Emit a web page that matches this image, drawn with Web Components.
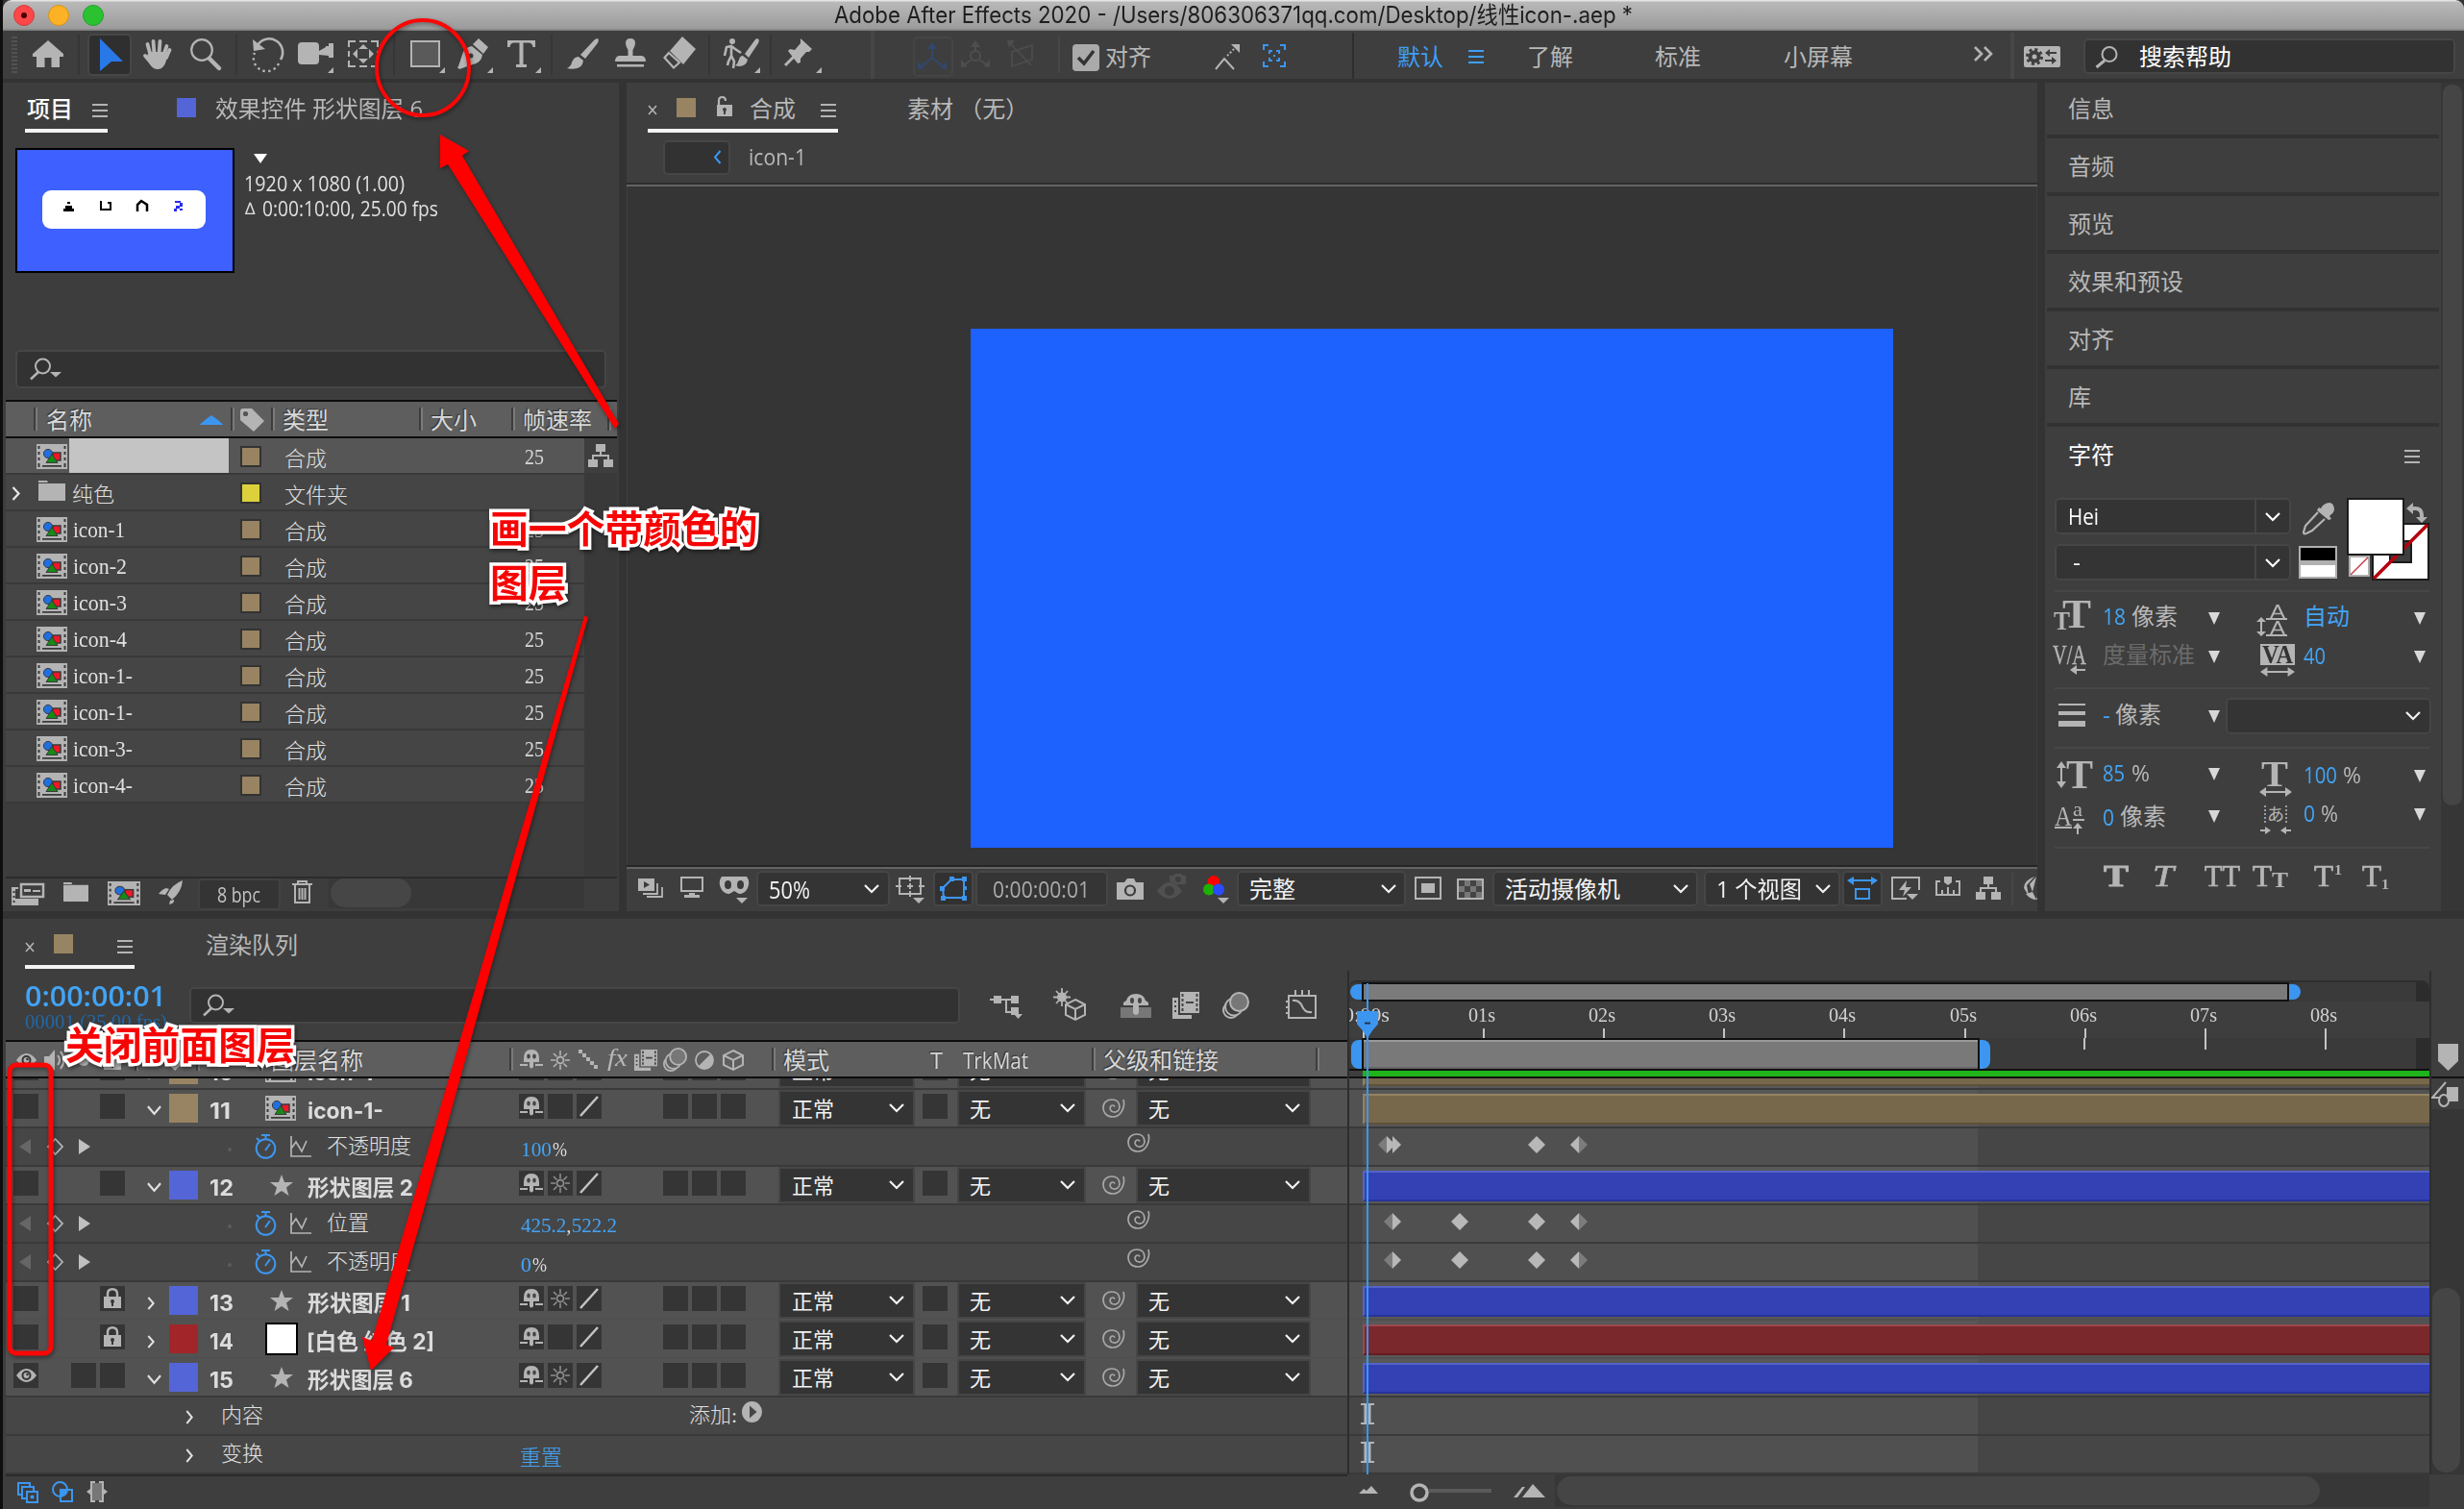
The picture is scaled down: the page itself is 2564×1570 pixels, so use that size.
<!DOCTYPE html>
<html lang="zh-CN">
<head>
<meta charset="utf-8">
<title>Adobe After Effects 2020</title>
<style>
html,body{margin:0;background:#333;overflow:hidden}
</style>
</head>
<body>
<ae-window></ae-window>
<script>
const UI='"Open Sans","Noto Sans CJK SC",sans-serif';
const SERIF='"Liberation Serif","Noto Sans CJK SC",serif';
const INTER='Inter,"Noto Sans CJK SC",sans-serif';

/* ---------- icon set: [width, height, svg content] ---------- */
const shapes=`<circle cx="12" cy="10" r="4.6" fill="#1f6fe0" stroke="#3a3a3a"/><rect x="17" y="9" width="8" height="8" fill="#f01828" stroke="#3a3a3a" stroke-width="1.5"/><path d="M10 19.5L16 10.5L22 19.5Z" fill="#168a16" stroke="#3a3a3a"/>`;
const moon=(b)=>`<g fill="${b}" stroke="currentColor" stroke-width="2"><ellipse cx="9" cy="19" rx="8" ry="8"/><ellipse cx="12" cy="15.5" rx="9" ry="9"/><ellipse cx="17.500" cy="10.500" rx="9.500" ry="9.500" fill="#777"/></g>`;
const S='fill="none" stroke="currentColor"';
const ICONS={
 corner:[6,6,`<path d="M6 0V6H0Z"/>`],
 tri:[12,13,`<path d="M0 0H12L6 13Z"/>`],
 tris:[12,6,`<path d="M0 0H12L6 6Z"/>`],
 ham:[16,14,`<path d="M0 0H16V2H0ZM0 6H16V8H0ZM0 12H16V14H0Z"/>`],
 chev:[16,9,`<path d="M1 1L8 8L15 1" ${S} stroke-width="2.200"/>`],
 chevr:[9,15,`<path d="M1.500 1L7.500 7.500L1.500 14" ${S} stroke-width="2.200"/>`],
 chevl:[9,15,`<path d="M7.500 1L2 7.500L7.500 14" ${S} stroke-width="2"/>`],
 close:[10,11,`<path d="M1 1L9 10M9 1L1 10" ${S} stroke-width="1.600"/>`],
 find:[34,23,`<circle cx="13.500" cy="9" r="7.500" ${S} stroke-width="2"/><path d="M9 15L1 22.500" ${S} stroke-width="2.500"/><path d="M21 15H33L27 20.500Z"/>`],
 mag:[24,23,`<circle cx="15" cy="8.500" r="7.500" ${S} stroke-width="2"/><path d="M10 15L1.500 22" ${S} stroke-width="3"/>`],
 grip:[6,38,`<path d="M0 0h6v2H0zM0 4h6v2H0zM0 8h6v2H0zM0 12h6v2H0zM0 16h6v2H0zM0 20h6v2H0zM0 24h6v2H0zM0 28h6v2H0zM0 32h6v2H0zM0 36h6v2H0z"/>`],
 home:[32,28,`<path d="M16 0L32 14V17H28V28H19.500V18H12.500V28H4V17H0V14Z"/>`],
 arrow:[24,34,`<path d="M0 0L24 24L12 24L0 34Z"/>`],
 hand:[31,32,`<path d="M8.500 17L5.500 6M12.500 16L11.500 3M17.500 16L18.500 3M22 18L25.500 8M28.500 12L25 20M9 25L3 18" ${S} stroke-width="3.800" stroke-linecap="round"/><path d="M7 14H24L26 18Q24 32 16 32Q11 32 8 27L4 20Z"/>`],
 zoom:[33,33,`<ellipse cx="12" cy="12" rx="10.800" ry="10.800" ${S} stroke-width="2.200"/><path d="M20 21L30 31" ${S} stroke-width="4.500" stroke-linecap="round"/>`],
 rotate:[32,33,`<path d="M5 7A14 14 0 0 1 29 22" ${S} stroke-width="2.600"/><path d="M27 26A13.500 13.500 0 0 1 2 15" ${S} stroke-width="2.400" stroke-dasharray="2.400 3.400"/><path d="M0 1L1 13L13 11Z"/>`],
 cam:[37,23,`<rect x="0" y="0" width="22" height="23" rx="4"/><path d="M22 9L29 5V4H32V1H37V16H32V14L22 13Z"/>`],
 pan:[32,28,`<path d="M1 7V1H8M12 1H20M24 1H31V7M31 21V27H24M20 27H12M8 27H1V21M1 11V17M31 11V17" ${S} stroke-width="2"/><path d="M16 4L21 9H11ZM16 24L11 19H21ZM5 14L10 9V19ZM27 14L22 19V9Z"/>`],
 rect:[31,28,`<rect x="1" y="1" width="29" height="26" fill="#5a5a5a" stroke="currentColor" stroke-width="2"/>`],
 pen:[32,32,`<path d="M22 0L32 9L27 16L16 6ZM15 8L26 17Q25 25 16 27L2 32L0 30L9 20L8 22L1 29L6 14Q9 9 15 8Z"/><circle cx="14" cy="18" r="2.500" fill="#3e3e3e"/>`],
 type:[29,28,`<path d="M0 0H29V7H26.500Q26 2.500 22 2.500H16.500V25H20V28H9V25H12.500V2.500H7Q3 2.500 2.500 7H0Z"/>`],
 brush:[33,32,`<path d="M32 0Q34 2 31 6L19 21L14 17L28 2Q30 0 32 0ZM12 19L17 23Q16 31 8 31.500Q3 32 0 31Q4 29 5 25Q7 19 12 19Z"/>`],
 stamp:[32,30,`<path d="M16 0Q21 0 21 5Q21 8 18.500 12V18H28Q32 19 32 24H0Q0 19 4 18H13.500V12Q11 8 11 5Q11 0 16 0Z"/><rect x="2" y="27" width="28" height="2.500"/>`],
 eraser:[34,34,`<path d="M20 0L34 13L21 29L7 15Z"/><path d="M6 17L1.500 22L11 32.500L17 27Z" ${S} stroke-width="2.200"/>`],
 roto:[38,32,`<circle cx="10" cy="3" r="3"/><path d="M2 18L4 9L9 8L13 11L19 15M9 8V18L12 24L11 31M9 18L6 24L5 28" ${S} stroke-width="2.600"/><path d="M36 0Q39 1 37 5L27 20L23 16L34 1ZM21 18L26 22Q25 28 18 29Q15 29 13 28Q16 26 17 22Q18 18 21 18Z"/>`],
 pin:[29,29,`<path d="M17 0L29 11L26 14H23L17 21V25L14 26L4 13L6 11L11 12L17 5Z"/><path d="M11 18L1 28" ${S} stroke-width="3"/>`],
 axis:[30,28,`<path d="M15 3V16L4 25M15 16L26 25" ${S} stroke-width="2"/><path d="M15 0L20 7H10ZM0 28V20L7 27ZM30 28V20L23 27Z"/>`],
 axis2:[30,28,`<path d="M15 3V12M11 20L4 25M19 20L26 25" ${S} stroke-width="2"/><circle cx="15" cy="16" r="5" ${S} stroke-width="2"/><path d="M15 0L20 7H10ZM0 28V20L7 27ZM30 28V20L23 27Z"/>`],
 axis3:[27,28,`<path d="M5 12L26 5V20L5 27ZM3 3L25 26" ${S} stroke-width="1.600"/><path d="M0 0H8L2 8Z"/>`],
 check:[28,28,`<rect width="28" height="28" rx="4" fill="#aaa"/><path d="M6 14L12 20L22 7" fill="none" stroke="#333" stroke-width="3.500"/>`],
 snap:[26,27,`<path d="M1 26L10 15L20 26" ${S} stroke-width="2"/><path d="M13 12L20 5" ${S} stroke-width="2" stroke-dasharray="2 2"/><path d="M17 0H26V9Z"/>`],
 brk:[24,24,`<path d="M1 6V1H6M18 1H23V6M23 18V23H18M6 23H1V18M7 10V7H10M14 7H17V10M17 14V17H14M10 17H7V14" ${S} stroke-width="2"/><path d="M11 11h2v2h-2z"/>`],
 more:[22,16,`<path d="M1 1L8 8L1 15M11 1L18 8L11 15" ${S} stroke-width="2.600"/>`],
 sync:[38,22,`<rect width="38" height="22" rx="2"/><circle cx="11" cy="11" r="4.500" fill="none" stroke="#3e3e3e" stroke-width="4"/><circle cx="11" cy="11" r="7.500" fill="none" stroke="#3e3e3e" stroke-width="3" stroke-dasharray="3 2.900"/><path d="M22 7L27 3V6H34V8H27V11ZM34 15L29 11V14H22V16H29V19Z" fill="#3e3e3e"/>`],
 lockopen:[17,21,`<path d="M1 9H17V21H1Z"/><path d="M3 9V5Q3 1 6.500 1T10 5" ${S} stroke-width="2.200"/><circle cx="9" cy="14" r="2" fill="#3e3e3e"/><path d="M8 14h2v5h-2z" fill="#3e3e3e"/>`],
 lock:[18,21,`<path d="M0 9H18V21H0Z"/><path d="M4 9V6Q4 1.200 9 1.200T14 6V9" ${S} stroke-width="2.400"/><circle cx="9" cy="14" r="2" fill="#353535"/><path d="M8 14h2v5h-2z" fill="#353535"/>`],
 up:[24,10,`<path d="M0 10Q1 8 12 0Q23 8 24 10Z"/>`],
 tag:[25,24,`<path d="M3 0H12L25 13L14 24L0 12V3Q0 0 3 0Z"/><circle cx="5.500" cy="5.500" r="2.600" fill="#555"/>`],
 comp:[32,26,`<rect width="32" height="26"/><path d="M1.500 2h2v3h-2zM1.500 8h2v3h-2zM1.500 14h2v3h-2zM1.500 20h2v4h-2zM28.500 2h2v3h-2zM28.500 8h2v3h-2zM28.500 14h2v3h-2zM28.500 20h2v4h-2zM6 22h20v1.800H6z" fill="#3a3a3a"/>${shapes}`],
 folder:[28,21,`<path d="M0 0H9L10 2H0ZM0 3H28V21H0Z"/>`],
 net:[26,24,`<path d="M8 0H18V8H8ZM0 16H10V24H0ZM16 16H26V24H16Z"/><path d="M13 8V12M5 16V12H21V16" ${S} stroke-width="2"/>`],
 interp:[34,23,`<path d="M10 1H33V14H10Z" ${S} stroke-width="2.500"/><path d="M13 6h7v3h-7zM22 7h8v2h-8zM0 4H7V6H4V16H28V23H0Z"/><path d="M1.500 8h2v2h-2zM1.500 13h2v2h-2zM1.500 18h2v2h-2z" fill="#3a3a3a"/>`],
 rocket:[25,25,`<path d="M25 0Q24 12 14 20L9 15Q14 4 25 0ZM8 8L11 9L7 15L0 14Q4 9 8 8ZM16 20Q17 24 11 25L12 21Z"/>`],
 trash:[21,24,`<path d="M0 4H21M6 3V1H15V3M3 5V23H18V5M7.500 8V20M10.500 8V20M13.500 8V20" ${S} stroke-width="2"/>`],
 prev:[26,20,`<path d="M0 0H17V13H0Z"/><path d="M20 5V16H5M25 9V19H9" ${S} stroke-width="1.800"/><path d="M6 3L12 6.500L6 10Z" fill="#3a3a3a"/>`],
 mon:[24,22,`<path d="M1 1H23V15H1Z" ${S} stroke-width="2"/><path d="M9 17H15V19H20V22H4V19H9Z"/>`],
 mask:[32,18,`<path d="M3 0H29Q33 5 30 12Q27 18 21 18L16 15L11 18Q5 18 2 12Q-1 5 3 0Z"/><ellipse cx="9.500" cy="8.500" rx="3.500" ry="4.500" fill="#3a3a3a"/><ellipse cx="22.500" cy="8.500" rx="3.500" ry="4.500" fill="#3a3a3a"/>`],
 safe:[30,22,`<path d="M4 3H26V19H4ZM15 0V6M15 16V22M0 11H6M24 11H30M12 11H18M15 8V14" ${S} stroke-width="2"/>`],
 shape:[28,25,`<path d="M3 12L12 3H25V22H4Z" ${S} stroke-width="2"/><path d="M10 0h5v5h-5zM23 0h5v5h-5zM0 10h5v5H0zM1 20h5v5H1zM23 20h5v5h-5zM24 10h4v4h-4z"/>`],
 photo:[28,22,`<path d="M0 4H8L11 0H18L20 4H28V22H0Z"/><circle cx="14" cy="12.500" r="5" fill="none" stroke="#3a3a3a" stroke-width="2.200"/>`],
 ghost:[30,26,`<path d="M0 18Q6 9 13 9T26 18Q20 26 13 26T0 18Z"/><circle cx="13" cy="18" r="5" fill="#3e3e3e"/><path d="M13 2h4l2-2h6l2 2h3v9H20L13 8z"/><circle cx="22" cy="6" r="3" fill="#3e3e3e"/>`],
 rgb:[22,21,`<circle cx="11" cy="6.500" r="6.500" fill="#f00"/><circle cx="6" cy="14.500" r="6" fill="#1db100"/><circle cx="16" cy="14.500" r="6" fill="#2a4bff"/>`],
 sq:[28,24,`<path d="M1 1H27V23H1Z" ${S} stroke-width="2"/><path d="M7 7H21V17H7Z"/>`],
 chk:[28,22,`<path d="M1 1H27V21H1Z" fill="#777" stroke="currentColor" stroke-width="2"/><path d="M2 2h6v6H2zM14 2h6v6h-6zM8 8h6v6H8zM20 8h6v6h-6zM2 14h6v6H2zM14 14h6v6h-6z" fill="#444"/>`],
 par:[32,24,`<path d="M4 4H28" ${S} stroke-width="2"/><path d="M0 4L7 0V9ZM32 4L25 0V9Z"/><path d="M9 13H23V23H9Z" ${S} stroke-width="2"/>`],
 fast:[30,24,`<path d="M29 14V1H1V23H16" ${S} stroke-width="2"/><path d="M16 4L8 14H14L12 21L21 11H15ZM16 18H28L22 24Z"/>`],
 tl:[26,20,`<path d="M5 5H1V19H25V5H21M7 14V19M13 11V19M19 14V19" ${S} stroke-width="2"/><path d="M9 0H17V6L13 9L9 6Z"/>`],
 aper:[26,24,`<path d="M11 0Q0 4 0 12L5 20L3 9ZM13 0L6 8L9 16ZM2 18Q7 24 13 24L9 16ZM20 2V24L13 24Z"/>`],
 drop:[34,34,`<path d="M22 3Q25 0 29 0T34 6Q34 10 31 12L29 14L31 17L28 18L16 8L18 5L20 6Z"/><path d="M17 10L4 24L2 31Q2 33 5 32L11 29L24 17" ${S} stroke-width="2.200"/>`],
 bw:[40,34,`<rect width="40" height="34" fill="#b0b0b0"/><path d="M2 2H38V15H2Z" fill="#000"/><path d="M2 20H38V32H2Z" fill="#fff"/>`],
 swatch:[86,86,`<rect x="27" y="27" width="58" height="58" fill="#fff" stroke="#1b1b1b" stroke-width="2"/><rect x="45" y="45" width="22" height="22" fill="#3e3e3e" stroke="#1b1b1b" stroke-width="2"/><path d="M28 84L84 28" stroke="#b8000c" stroke-width="3.500"/><rect x="1" y="1" width="58" height="58" fill="#fff" stroke="#1b1b1b" stroke-width="2"/><rect x="3" y="61" width="20" height="20" fill="#fff" stroke="#b0b0b0" stroke-width="2"/><path d="M4 80L22 62" stroke="#cc3a40" stroke-width="1.500"/><path d="M66 11H71Q78 11 78 18V20" fill="none" stroke="#b0b0b0" stroke-width="4"/><path d="M62 11L69 5V17ZM72 20H84L78 26Z" fill="#b0b0b0"/>`],
 lines:[28,24,`<path d="M0 0H28V2H0ZM0 8H28V12H0ZM0 18H28V24H0Z"/>`],
 ud:[10,28,`<path d="M5 4V24" ${S} stroke-width="2"/><path d="M5 0L10 7H0ZM5 28L0 21H10Z"/>`],
 lr:[34,10,`<path d="M4 5H30" ${S} stroke-width="2"/><path d="M0 5L7 0V10ZM34 5L27 10V0Z"/>`],
 la:[16,10,`<path d="M4 5H16" ${S} stroke-width="2"/><path d="M0 5L7 0V10Z"/>`],
 ua:[10,12,`<path d="M5 4V12" ${S} stroke-width="2"/><path d="M5 0L10 6H0Z"/>`],
 inout:[32,8,`<path d="M0 4H7M32 4H25" ${S} stroke-width="2"/><path d="M5 0L11 4L5 8ZM27 0L21 4L27 8Z"/>`],
 dots:[24,20,`<path d="M1 0V20M23 0V20" ${S} stroke-width="1.600" stroke-dasharray="2 2"/>`],
 flow:[34,25,`<path d="M0 5H22M17 6V18H24" ${S} stroke-width="2"/><path d="M4 1h8v8H4zM22 1h8v8h-8zM22 13h8v8h-8zM25 20h9l-4.500 5z"/>`],
 suncube:[34,34,`<path d="M9 0V19M0 9.500H18M3 3L15 16M15 3L3 16" ${S} stroke-width="1.800"/><circle cx="9" cy="9.500" r="5"/><path d="M23 12L33 17V28L23 33L13 28V17ZM13 17L23 22L33 17M23 22V33" ${S} stroke-width="2"/>`],
 shy2:[32,25,`<path d="M0 14H32V25H0Z" fill="#777"/><path d="M3 12V9L6 7Q8 0 16 0T26 7L29 9V12H19V20Q16 24 13 20V12Z"/><ellipse cx="12" cy="7" rx="2" ry="3" fill="#444"/><ellipse cx="20" cy="7" rx="2" ry="3" fill="#444"/>`],
 frames:[28,28,`<path d="M0 6H6V24H20V28H0Z"/><path d="M8 0H28V22H8Z"/><path d="M2 9h2v2H2zM2 14h2v2H2zM2 19h2v2H2zM9.500 2h2v3h-2zM9.500 7h2v3h-2zM9.500 12h2v3h-2zM9.500 17h2v3h-2zM24.500 2h2v3h-2zM24.500 7h2v3h-2zM24.500 12h2v3h-2zM24.500 17h2v3h-2zM14 10h8v2h-8z" fill="#444"/>`],
 blur:[28,28,moon('#3e3e3e')],
 graph:[32,30,`<path d="M3 6H31V29H3ZM10 0V5M17 0V5M24 0V5M0 12H3M0 18H3M0 24H3M7 11Q14 10 17 17T27 23" ${S} stroke-width="2"/>`],
 eye:[21,14,`<path d="M0 7Q5 0 10.500 0T21 7Q16 14 10.500 14T0 7Z"/><circle cx="10.500" cy="7" r="5" fill="#353535"/><circle cx="10.500" cy="7" r="3"/><circle cx="11.500" cy="6" r="1.300" fill="#353535"/>`],
 spk:[24,22,`<path d="M0 7H5L11 0V22L5 15H0Z"/><path d="M14 6Q18 11 14 16M17 2Q24 11 17 20" ${S} stroke-width="2"/>`],
 shy:[24,20,`<path d="M4 13V9Q4 0 12 0T20 9V13H14V18Q12 21 10 18V13Z"/><ellipse cx="9" cy="7" rx="1.800" ry="2.500" fill="#444"/><ellipse cx="15" cy="7" rx="1.800" ry="2.500" fill="#444"/><path d="M0 15H8V17H0ZM16 15H24V17H16Z"/>`],
 sun:[20,20,`<circle cx="10" cy="10" r="3.500" ${S} stroke-width="1.800"/><path d="M10 0V5M10 15V20M0 10H5M15 10H20M3 3L6.500 6.500M13.500 13.500L17 17M17 3L13.500 6.500M6.500 13.500L3 17" ${S} stroke-width="1.600"/>`],
 steps:[20,20,`<path d="M0 0h4v4H0zM4 4h4v4H4zM8 8h4v4H8zM12 12h4v4h-4zM16 16h4v4h-4z"/>`],
 slash:[22,22,`<path d="M2 21L20 1" ${S} stroke-width="2.500"/>`],
 mb:[28,28,moon('#5e5e5e')],
 half:[20,20,`<circle cx="10" cy="10" r="9" ${S} stroke-width="1.800"/><path d="M16.500 3.500A9 9 0 0 1 3.500 16.500Z"/>`],
 cube:[22,22,`<path d="M11 1L21 6V16L11 21L1 16V6ZM1 6L11 11L21 6M11 11V21" ${S} stroke-width="2"/>`],
 spiral:[24,20,`<path d="M22 1C24 8 20 19 11 19C4 19 1 14 1 9.500C1 4 5 1 10 1C15 1 18 4 18 8.500C18 12.500 15 14.500 12 14C8.500 13.500 7.500 10.500 8.500 8.500C9.500 6.500 12 6.500 13 8.500" ${S} stroke-width="1.700"/>`],
 star:[24,22,`<path d="M12 0L15 8H24L17 13.500L19.500 22L12 17L4.500 22L7 13.500L0 8H9Z"/>`],
 kprev:[12,16,`<path d="M12 0V16L0 8Z"/>`],
 knext:[12,16,`<path d="M0 0V16L12 8Z"/>`],
 kdia:[17,18,`<path d="M8.500 1L16 9L8.500 17L1 9Z" ${S} stroke-width="1.800"/>`],
 watch:[23,26,`<circle cx="11.500" cy="15" r="9.800" ${S} stroke-width="2"/><path d="M7 1H16M11.500 1V5M2 4L5 7M11 17L16 10" ${S} stroke-width="2"/>`],
 pgraph:[22,22,`<path d="M1 0V21H22M1 13L6 6L12 16L17 5" ${S} stroke-width="1.700"/>`],
 play:[21,22,`<ellipse cx="10.500" cy="11" rx="10.500" ry="11"/><path d="M8 4.500L15.500 11L8 17.500Z" fill="#464646"/>`],
 tg1:[22,22,`<path d="M5 13H1V1H13V5M9 17H5V5H17V9" ${S} stroke-width="2"/><path d="M10 10H21V21H10Z" ${S} stroke-width="2"/><circle cx="15.500" cy="15.500" r="2"/>`],
 tg2:[22,22,`<circle cx="8.500" cy="8.500" r="7.500" ${S} stroke-width="2"/><path d="M9 9H21V21H9Z" ${S} stroke-width="2"/><path d="M9 9H16Q15 15 9 16Z"/>`],
 tg3:[22,22,`<path d="M4 0H9V2H13V0H18V8L22 11L18 14V22H13V20H9V22H4V14L0 11L4 8Z"/><path d="M6 2H16V20H6Z" fill="#777"/>`],
 kf:[18,18,`<path d="M9 0L18 9L9 18L0 9Z" fill="#b8b8b8"/>`],
 kfh:[18,18,`<path d="M9 0L18 9L9 18Z" fill="#b8b8b8"/>`],
 kfl:[18,18,`<path d="M9 0L0 9L9 18Z" fill="#7c7c7c"/><path d="M9 0L18 9L9 18Z" fill="#b8b8b8"/>`],
 kfr:[18,18,`<path d="M9 0L0 9L9 18Z" fill="#b8b8b8"/><path d="M9 0L18 9L9 18Z" fill="#7c7c7c"/>`],
 ibeam:[14,22,`<path d="M0 0H14V2H10.500V20H14V22H0V20H3.500V2H0Z"/>`],
 head:[22,29,`<path d="M0 0H22V14Q16 20 11 29Q6 20 0 14Z"/><path d="M8 12H14V14H8Z" fill="#234"/>`],
 marker:[21,28,`<path d="M0 0H21V18L10.500 28L0 18Z"/>`],
 cmk:[28,26,`<path d="M16 5H28V20H16Z"/><path d="M15 0L1 16H12" ${S} stroke-width="2"/><ellipse cx="13" cy="19" rx="5" ry="6" fill="#3e3e3e" stroke="currentColor" stroke-width="2"/>`],
 mt1:[20,8,`<path d="M0 8L5 3L8 5L13 0L20 8Z"/>`],
 mt2:[33,14,`<path d="M9 14L20 0L33 14ZM0 14L9 3H12L4 14Z"/>`],
 knob:[20,20,`<circle cx="10" cy="10" r="8" fill="#3e3e3e" stroke="currentColor" stroke-width="3.500"/>`],
 thumb:[228,130,`<rect width="228" height="130" fill="#000"/><rect x="2" y="2" width="224" height="126" fill="#3d60ff"/><rect x="28" y="44" width="170" height="40" rx="9" fill="#fff"/><path d="M50 63h11v3H50zM52 60h7v3h-7zM54 56h3v2h-3z" fill="#000"/><path d="M89 55V64H99V57H96" fill="none" stroke="#000" stroke-width="2"/><path d="M127 66V59L131 55L137 59V66" fill="none" stroke="#000" stroke-width="2.500"/><path d="M166 55h6v2h-6zM171 57h3v4h-3zM167 60h4v3h-4zM165 63h3v3h-3zM171 63h3v2h-3z" fill="#2a2af0"/>`]
};

/* ---------- helpers that build flow rows from a list of cells ---------- */
const line=(ox,oy,items)=>{let p=ox;return items.filter(Boolean).map(i=>{const m=i.x-p;p=i.x+i.w;
 return `<div style="flex:none;margin:${i.y-oy}px 0 0 ${m}px;width:${i.w}px;height:${i.h}px;${i.s||''}">${i.html||''}</div>`}).join('')};
const I=(n,x,y,c,w,h)=>{const d=ICONS[n];w=w||d[0];h=h||d[1];return{x,y,w,h,html:`<ae-icon name="${n}" style="width:${w}px;height:${h}px;${c?`color:${c}`:''}"></ae-icon>`}};
const T=(s,x,cy,o={})=>{const z=o.z||24;return{x,y:cy-16,w:o.w||Math.round(s.length*z),h:32,html:`<ae-text ${o.w?`fit="${o.w}"`:''} style="font-size:${z}px;color:${o.c||'#b8b8b8'};${o.f?`font-family:${o.f.replace(/"/g,"'")};`:''}${o.b?`font-weight:${o.b};`:''}${o.s||''}">${s}</ae-text>`}};
const B=(x,y,w,h,bg,s='',html='')=>({x,y,w,h,s:`box-sizing:border-box;background:${bg};${s}`,html});
const SEP=(x,y,h,c='#363636',w=2)=>B(x,y,w,h,c);
const D=(x,y,w,h,s,tx,cx,o={})=>({x,y,w,h,html:`<ae-select style="width:${w}px;height:${h}px;${o.s||''}">${line(x,y,[s&&T(s,tx,y+h/2+(o.dy||0),{c:'#f2f2f2',...o,s:''}),I('chev',cx,Math.round(y+h/2-5),'#f2f2f2')])}</ae-select>`});
const BOX='border:2px solid #464646;border-radius:5px;';

const def=(name,css,html)=>customElements.define(name,class extends HTMLElement{
 connectedCallback(){ if(this.shadowRoot)return;
  this.attachShadow({mode:'open'}).innerHTML=`<style>:host{display:block;box-sizing:border-box}.r{display:flex;align-items:flex-start;box-sizing:border-box;overflow:hidden}${css}</style>`+(typeof html==='function'?html(this):html);}
});

customElements.define('ae-icon',class extends HTMLElement{
 connectedCallback(){ if(this.shadowRoot)return; const d=ICONS[this.getAttribute('name')];
  this.attachShadow({mode:'open'}).innerHTML=`<style>:host{display:block;color:#b4b4b4}svg{display:block;width:100%;height:100%;overflow:visible}</style><svg viewBox="0 0 ${d[0]} ${d[1]}" preserveAspectRatio="none" fill="currentColor">${d[2]}</svg>`;}
});
/* Text that is condensed or widened to the width in its "fit" attribute */
customElements.define('ae-text',class extends HTMLElement{
 connectedCallback(){ if(this.shadowRoot)return;
  this.attachShadow({mode:'open'}).innerHTML=`<style>:host{display:block;white-space:pre;line-height:32px}span{display:inline-block;transform-origin:0 50%}</style><span><slot></slot></span>`;
  const f=+this.getAttribute('fit'); if(f){const s=this.shadowRoot.querySelector('span');const w=s.getBoundingClientRect().width;if(w)s.style.transform=`scaleX(${f/w})`;}}
});
def('ae-select',':host{display:flex;align-items:flex-start;background:#343434;box-shadow:inset 0 0 0 2px #464646;border-radius:5px}','<slot></slot>');

/* ---------- title bar and toolbar ---------- */
const light=(x,c,b,dot='')=>B(x,5,22,22,c,`border:1px solid ${b};border-radius:50%;display:flex;align-items:center;justify-content:center;`,dot);
def('ae-titlebar',':host{height:32px;background:linear-gradient(#e4e4e4 0 1px,#b9b9b9 2px,#9b9b9b 30px,#7c7c7c 31px);border-radius:9px 9px 0 0}.r{height:32px}',
 `<div class="r">${line(3,0,[light(14,'#fc4748','#d8393b','<i style="width:6px;height:6px;border-radius:50%;background:#4a0004"></i>'),light(50,'#fdb124','#d99517'),light(86,'#2ac231','#22a328'),
  T('Adobe After Effects 2020 - /Users/806306371qq.com/Desktop/线性icon-.aep *',868,16,{w:831,f:INTER,z:24,c:'#1e1e1e'})])}</div>`);

def('ae-toolbar',':host{height:50px;background:#3e3e3e}.r{height:50px}',
 `<div class="r">${line(3,32,[I('grip',12,38,'#525252'),I('home',34,42),SEP(81,36,42),
  B(91,35,46,44,'#2f2f2f','border:2px solid #464646;border-radius:5px;display:flex;',line(93,37,[I('arrow',104,40,'#2878e8')])),
  I('hand',148,40),I('zoom',198,40),SEP(245,36,42),I('rotate',263,40),I('cam',310,44),I('corner',341,70),I('pan',362,42),SEP(409,36,42),
  I('rect',427,42),I('corner',457,70),I('pen',476,40),I('corner',507,70),I('type',528,42),I('corner',557,70),SEP(573,36,42),
  I('brush',590,40),I('stamp',640,40),I('eraser',690,38),SEP(737,36,42),I('roto',752,40),I('corner',785,70),SEP(801,36,42),I('pin',816,40),I('corner',849,70),
  SEP(906,32,50,'#464646',4),
  B(950,38,42,42,'transparent',BOX+'border-color:#454545;display:flex;',line(952,40,[I('axis',955,44,'#31486c')])),
  I('axis2',1000,42,'#4e4e4e'),I('axis3',1048,42,'#4e4e4e'),SEP(1101,38,38,'#464646'),
  I('check',1116,46),T('对齐',1150,59),I('snap',1264,46),I('brk',1314,46,'#3c96f0'),SEP(1407,34,48,'#2d2d2d'),
  T('默认',1454,59,{c:'#3e9ff8'}),I('ham',1528,52,'#3e9ff8'),T('了解',1589,59),T('标准',1722,59),T('小屏幕',1856,59),I('more',2054,48),
  SEP(2092,34,48,'#474747',4),I('sync',2106,48),
  B(2168,40,387,37,'#323232',BOX+'display:flex;',line(2170,42,[I('mag',2180,48),T('搜索帮助',2226,59,{c:'#fff'})]))
 ])}</div>`);

/* ---------- project panel ---------- */
const names=['','纯色','icon-1','icon-2','icon-3','icon-4','icon-1-','icon-1-','icon-3-','icon-4-'];
const th={c:'#d8d8d8',s:'text-shadow:-1px -1px 1px #333;'};
const hsep=x=>B(x,424,4,24,'#7a7a7a','border-left:2px solid #3d3d3d;');
const prow=(n,k)=>{const y=456+38*k,f=k==1;return `<div class="r row ${k?'':'sel'}">${line(6,y,[
  f&&I('chevr',12,y+12,'#e8e8e8'),
  f?I('folder',40,y+6):I('comp',38,y+6),
  k==0?B(72,y,166,36,'#c4c4c4'):f?T(n,75,y+21,{z:22,f:SERIF,b:300,c:'#e0e0e0'}):T(n,76,y+20,{z:23,f:SERIF,c:'#e0e0e0',w:n.length>6?62:n=='icon-1'?54:56}),
  B(250,y+8,22,22,f?'#dcd13c':'#988462','border:2px solid #333;'),
  T(f?'文件夹':'合成',296,y+22,{z:22,f:SERIF,b:300,c:'#e0e0e0'}),
  !f&&T('25',546,y+20,{z:23,f:SERIF,c:'#d6d6d6',w:20})])}</div>`};
def('ae-project-panel',`:host{width:641px;height:862px;background:#3d3d3d;display:flex;flex-direction:column}
 .row{height:38px;background:#454545;border-bottom:2px solid #393939}.sel{background:#565656}
 .body{display:flex;height:456px;margin:0 2px 0 3px}.list{width:602px;background:#3d3d3d}.rail{flex:1;background:#393939}
 .th{height:40px;margin:0 2px 0 3px;background:#5e5e5e;border:solid #0d0d0d;border-width:2px 0}`,
`<div class="r" style="height:60px">${line(3,86,[T('项目',28,113,{c:'#fff',b:500}),I('ham',96,108),B(184,102,20,20,'#5465d8'),T('效果控件 形状图层 6',224,113,{w:216})])}</div>
<div class="r" style="height:4px;margin-top:-12px">${line(3,134,[B(26,134,86,4,'#f4f4f4')])}</div>
<div class="r" style="height:212px">${line(3,138,[I('thumb',16,154),{x:254,y:160,w:210,h:90,s:'display:flex;flex-direction:column;',html:`<div class="r" style="height:14px">${line(254,160,[I('tri',264,160,'#fff',14,10)])}</div><div class="r" style="height:26px;overflow:visible">${line(254,174,[T('1920 x 1080 (1.00)',254,190,{z:22,c:'#e0e0e0',w:167})])}</div><div class="r" style="height:26px;overflow:visible">${line(254,200,[T('∆',255,217,{z:17,c:'#e0e0e0',w:11}),T('0:00:10:00, 25.00 fps',273,216,{z:22,c:'#e0e0e0',w:183})])}</div>`}])}</div>
<div class="r" style="height:66px">${line(3,350,[B(16,364,615,40,'#323232',BOX+'display:flex;',line(18,366,[I('find',31,372)]))])}</div>
<div class="r th">${line(6,418,[hsep(35),T('名称',48,437,th),I('up',208,432,'#3c96f0'),hsep(240),I('tag',250,425),hsep(282),T('类型',294,437,th),hsep(436),T('大小',448,437,th),hsep(532),T('帧速率',544,437,th),hsep(632)])}</div>
<div class="body"><div class="list">${names.map(prow).join('')}</div><div class="rail r">${line(608,456,[B(608,456,34,36,'#3e3e3e','display:flex;',line(608,456,[I('net',612,462)]))])}</div></div>
<div class="r" style="height:36px;border-top:2px solid #2b2b2b;margin:0 2px 0 3px">${line(6,914,[I('interp',12,919),I('folder',66,918,'',26,20),I('comp',112,917,'',34,25),I('rocket',165,916),B(206,914,86,33,'#343434','border:2px solid #424242;border-radius:4px;display:flex;',line(208,916,[T('8 bpc',226,930,{z:22,w:45,c:'#c4c4c4'})])),I('trash',304,916),B(342,913,266,32,'#383838','display:flex;',line(342,913,[B(344,914,84,30,'#464646','border-radius:15px;')]))])}</div>`);

/* ---------- composition viewer ---------- */
def('ae-comp-panel',`:host{width:1468px;height:862px;background:#3e3e3e;display:flex;flex-direction:column}
 .view{height:706px;background:#353535;display:flex;align-items:flex-start;margin:0 1px}.art{width:960px;height:540px;background:#1d61ff;margin:148px 0 0 357px}`,
`<div class="r" style="height:52px">${line(652,86,[I('close',674,109),B(704,102,20,20,'#988462'),I('lockopen',745,100),T('合成',780,113),I('ham',854,108),T('素材 （无）',944,113)])}</div>
<div class="r" style="height:4px;margin-top:-4px">${line(652,134,[B(674,134,198,4,'#f4f4f4')])}</div>
<div class="r" style="height:52px">${line(652,138,[B(690,146,70,36,'#323232',BOX+'display:flex;',line(692,148,[I('chevl',742,156,'#3c96f0')])),T('icon-1',779,163,{w:60})])}</div>
<div style="height:4px;background:linear-gradient(#2c2c2c 50%,#636363 50%)"></div>
<div class="view"><div class="art"></div></div>
<div style="height:4px;background:linear-gradient(#262626 50%,#636363 50%)"></div>
<div class="r" style="height:44px">${line(652,904,[I('prev',664,914),I('mon',708,912),I('mask',748,912),I('tris',766,934),
 D(787,906,139,37,'50%',800,899,{w:43,z:25}),I('safe',932,911),I('tris',950,934),
 B(971,906,42,37,'#313131',BOX+'display:flex;',line(973,908,[I('shape',978,912,'#3c96f0')])),
 B(1015,906,138,37,'#353535',BOX+'display:flex;',line(1017,908,[T('0:00:00:01',1033,925,{w:101,c:'#aaa'})])),
 I('photo',1162,914),I('ghost',1204,909,'#505050'),I('rgb',1252,911),I('tris',1267,934),
 D(1287,906,176,37,'完整',1300,1437),I('sq',1472,912),I('chk',1516,914),
 D(1553,906,214,37,'活动摄像机',1566,1741),D(1773,906,142,37,'1 个视图',1786,1889,{w:89}),
 B(1917,906,42,37,'#313131',BOX+'display:flex;',line(1919,908,[I('par',1922,912,'#3c96f0')])),I('fast',1968,912),I('tl',2014,912),I('net',2056,912),SEP(2093,908,34,'#464646'),I('aper',2106,912)])}</div>`);

/* ---------- side panels and character panel ---------- */
const blue='#42a4f5';
const G=(s,x,cy,z,w,o={})=>T(s,x,cy,{z,w,f:'"Liberation Serif",serif',c:'#b4b4b4',...o});
const cr=(y,h,items)=>`<div class="r" style="height:${h}px;overflow:visible">${line(2128,y,items)}</div>`;
const hr=`<div style="height:2px;background:#474747;margin:0 12px 0 10px"></div>`;
const thick='-webkit-text-stroke:.7px #b4b4b4;';
const leadA=`<div style="height:17px;border-bottom:2px solid #b4b4b4;box-sizing:border-box;display:flex;justify-content:center"><ae-text fit="16" style="font-size:21px;font-family:'Liberation Sans';color:#b4b4b4;margin-top:-8px">A</ae-text></div>`;
def('ae-side-panel',`:host{width:436px;height:862px;display:flex;background:#363636}
 .col{width:412px;background:#3e3e3e;display:flex;flex-direction:column}
 .p{height:60px;border-bottom:4px solid #323232;box-sizing:border-box;margin:0 2px;display:flex}.p.a{height:58px}
 .sb{width:20px;height:750px;margin:2px 0 0 2px;background:#454545;border-radius:9px}`,
`<div class="col">${['信息','音频','预览','效果和预设','对齐','库'].map((s,i)=>`<div class="p ${i?'':'a'}">${line(2130,84+60*i+(i?0:2),[T(s,2152,113+60*i)])}</div>`).join('')}
${cr(444,70,[T('字符',2152,473,{c:'#fff'}),I('ham',2502,468)])}
${cr(514,100,[{x:2138,y:518,w:246,h:86,s:'display:flex;flex-direction:column;gap:10px;',html:[['Hei',2152,32],['-',2157,8]].map(([s,x,w],i)=>{const y=518+48*i;return `<ae-select style="width:246px;height:38px">${line(2138,y,[T(s,x,y+19,{w,c:'#fff',z:23}),SEP(2346,y+2,34,'#464646'),I('chev',2357,y+15,'#fff')])}</ae-select>`}).join('')},
 {x:2392,y:523,w:40,h:80,s:'display:flex;flex-direction:column;gap:11px;',html:`<ae-icon name="drop" style="width:34px;height:34px;margin-left:3px"></ae-icon><ae-icon name="bw" style="width:40px;height:34px"></ae-icon>`},
 I('swatch',2442,518)])}
${hr}
${cr(616,46,[G('T',2137,646,27,17,{b:700}),G('T',2146,639,43,30,{b:700}),T('18',2188,641,{c:blue,w:24}),T('像素',2218,641),I('tri',2298,637,'#d8d8d8'),I('ud',2348,642,'',10,20),{x:2358,y:628,w:22,h:34,html:leadA+leadA},T('自动',2397,641,{c:blue}),I('tri',2512,637,'#d8d8d8')])}
${cr(662,53,[G('V/A',2136,681,30,35,{s:'-webkit-text-stroke:.4px #b4b4b4;'}),I('la',2154,692),T('度量标准',2188,681,{c:'#6b6b6b'}),I('tri',2298,677,'#d8d8d8'),{x:2352,y:670,w:36,h:34,html:`<div style="height:22px;background:#b4b4b4;display:flex;margin-bottom:2px">${line(2352,670,[G('VA',2354,681,27,32,{b:700,c:'#333'})])}</div><ae-icon name="lr" style="height:10px"></ae-icon>`},T('40',2397,682,{c:blue,w:23}),I('tri',2512,677,'#d8d8d8')])}
${hr}
${cr(717,60,[I('lines',2142,732),T('-',2188,744,{c:blue,w:8}),T('像素',2201,743),I('tri',2298,739,'#d8d8d8'),D(2316,726,214,38,'',0,2503)])}
${hr}
${cr(779,50,[I('ud',2140,792),G('T',2150,806,43,28,{b:700}),T('85',2188,804,{c:blue,w:23}),T('%',2218,804,{w:19}),I('tri',2298,799,'#d8d8d8'),{x:2351,y:791,w:34,h:38,s:'display:flex;flex-direction:column;',html:`<div class="r" style="height:27px;overflow:visible">${line(2351,791,[G('T',2353,805,38,28,{b:700})])}</div><ae-icon name="lr" style="height:10px;margin-top:1px"></ae-icon>`},T('100',2397,806,{c:blue,w:35}),T('%',2438,806,{w:19}),I('tri',2512,801,'#d8d8d8')])}
${cr(829,52,[G('A',2138,849,29,18,{s:'border-bottom:2px solid #b4b4b4;height:27px;'}),{x:2157,y:834,w:12,h:34,html:`<div class="r" style="height:18px;overflow:visible">${line(2157,834,[G('a',2157,842,21,10)])}</div><div style="height:2px;background:#b4b4b4;margin-bottom:2px"></div><ae-icon name="ua" style="width:10px;height:12px"></ae-icon>`},T('0',2188,850,{c:blue,w:12}),T('像素',2206,849),I('tri',2298,843,'#d8d8d8'),{x:2352,y:838,w:32,h:30,html:`<div class="r" style="height:22px;overflow:visible">${line(2352,838,[I('dots',2356,838),T('あ',2359,847,{z:18,c:'#b4b4b4'})])}</div><ae-icon name="inout" style="height:8px"></ae-icon>`},T('0',2397,846,{c:blue,w:12}),T('%',2415,846,{w:18}),I('tri',2512,841,'#d8d8d8')])}
${hr}
${cr(883,65,[G('T',2189,912,31,26,{b:700,s:'-webkit-text-stroke:1px #b4b4b4;'}),G('T',2240,912,31,22,{s:'font-style:italic;'+thick}),G('TT',2294,912,31,37,{s:thick}),G('T',2344,912,31,20,{s:thick}),G('T',2364,916,23,17,{b:700}),G('T',2408,912,31,20,{s:thick}),G('1',2429,905,15,8,{b:700}),G('T',2458,912,31,20,{s:thick}),G('1',2478,920,15,8,{b:700})])}
</div><div class="sb"></div>`);

/* ---------- timeline ---------- */
const TAN='#988462',BLU='#5465d8';
const rows=[
 {k:'L',n:'10',name:'icon-1-',t:'comp',c:TAN,bar:'tan',y:1094,clip:1},
 {k:'L',n:'11',name:'icon-1-',t:'comp',c:TAN,bar:'tan',tw:1},
 {k:'P',name:'不透明度',v:['100','%',32,15],kf:[['kfl',1443],['kfh',1449],['kf',1599],['kfr',1643]]},
 {k:'L',n:'12',name:'形状图层 2',t:'star',c:BLU,bar:'blue',tw:1},
 {k:'P',name:'位置',v:['425.2,522.2'],kf:[['kfl',1449],['kf',1519],['kf',1599],['kfr',1643]]},
 {k:'P',name:'不透明度',v:['0','%',11,15],kf:[['kfl',1449],['kf',1519],['kf',1599],['kfr',1643]]},
 {k:'L',n:'13',name:'形状图层 1',t:'star',c:BLU,bar:'blue',lock:1,join:1},
 {k:'L',n:'14',name:'[白色 纯色 2]',t:'solid',c:'#a22529',bar:'red',lock:1,join:1},
 {k:'L',n:'15',name:'形状图层 6',t:'star',c:BLU,bar:'blue',tw:1,eye:1},
 {k:'G',name:'内容',add:1},{k:'G',name:'变换',reset:1}];
rows.forEach((r,i)=>{if(i)r.y=1134+40*(i-1)});
const Q='#353535',sqr=(x,y,h='')=>B(x,y+4,26,26,Q,'display:flex;',h);
const left=r=>{const y=r.y;let it;
 if(r.k=='L')it=[sqr(14,y,r.eye?line(14,y+4,[I('eye',17,y+10)]):''),r.eye&&sqr(74,y),sqr(104,y,r.lock?line(104,y+4,[I('lock',108,y+6)]):''),
  r.tw?I('chev',153,y+16,'#e0e0e0',15,10):I('chevr',153,y+15,'#e0e0e0',8,14),
  B(176,y+4,30,30,r.c),T(r.n,218,y+22,{z:23,f:INTER,b:700,c:'#dcdcdc',w:25-(r.n=='11'?3:0)}),
  r.t=='comp'?I('comp',276,y+6):r.t=='star'?I('star',281,y+8):B(276,y+2,34,34,'#fff','border:2px solid #000;'),
  T(r.name,r.t=='solid'?319:320,y+22,{z:23,f:INTER,b:700,c:'#dcdcdc',w:r.t=='comp'?79:r.t=='solid'?133:110+(r.n=='13'?-3:0)}),
  sqr(540,y,line(540,y+4,[I('shy',541,y+7)])),sqr(570,y,r.t=='star'?line(570,y+4,[I('sun',573,y+7,'#8e8e8e')]):''),sqr(600,y,line(600,y+4,[I('slash',602,y+6,'#c4c4c4')])),
  sqr(690,y),sqr(720,y),sqr(750,y),
  D(810,y,142,38,'正常',824,925,{z:22,s:'border-radius:0;'}),sqr(960,y),D(996,y,134,38,'无',1009,1103,{z:22,s:'border-radius:0;'}),
  I('spiral',1147,y+9,'#a8a8a8'),D(1182,y,182,38,'无',1195,1337,{z:22,s:'border-radius:0;'})];
 else if(r.k=='P')it=[I('kprev',20,y+11,'#666'),I('kdia',49,y+10),I('knext',82,y+11,'#c0c0c0'),B(237,y+20,4,4,'#5c5c5c','border-radius:50%;'),
  I('watch',265,y+6,'#3c96f0'),I('pgraph',302,y+8),T(r.name,340,y+19,{z:22,f:SERIF,b:300,c:'#e0e0e0'}),
  ...(r.v.length>1?[T(r.v[0],542,y+22,{z:22,f:SERIF,c:blue,w:r.v[2]}),T(r.v[1],543+r.v[2],y+22,{z:21,f:SERIF,c:'#dcdcdc',w:r.v[3]})]:[T('425.2<span style="color:#dcdcdc">,</span>522.2',542,y+21,{z:22,f:SERIF,c:blue,w:100})]),
  I('spiral',1173,y+5,'#a8a8a8')];
 else it=[I('chevr',193,y+13,'#e0e0e0',8,15),T(r.name,230,y+19,{z:22,f:SERIF,b:300,c:'#e0e0e0'}),
  r.reset&&T('重置',541,y+23,{z:22,f:SERIF,b:300,c:blue,s:'text-decoration:underline;'}),
  ...(r.add?[T('添加:',717,y+19,{z:22,f:SERIF,b:300,c:'#e0e0e0'}),I('play',772,y+4)]:[])];
 return `<div class="r tr ${r.k} ${r.join?'j':''}" style="${r.clip?'margin-top:-28px':''}">${line(6,y,it)}</div>`};
const right=r=>{const y=r.y;let it=[];
 if(r.k=='L')it=[B(1418,y+4,1110,32,'','','<div class="bar '+r.bar+'"></div>')];
 if(r.k=='P')it=r.kf.map(([n,x])=>I(n,x-9,y+8));
 if(r.k=='G')it=[I('ibeam',1416,y+6)];
 return `<div class="r tr g ${r.k} ${r.join?'j':''}" style="${r.clip?'margin-top:-28px':''}">${line(1402,y,it)}</div>`};
const CAP=(x,y,w,h,l)=>B(x,y,w,h,'#3c96f0',`border-radius:${l?'8px 0 0 8px':'0 8px 8px 0'};`);
const h2=x=>B(x,1090,4,24,'#7a7a7a','border-left:2px solid #3d3d3d;');
def('ae-timeline-panel',`:host{height:614px;background:#3e3e3e}
 .cols{display:flex;height:560px}.left{width:1399px;display:flex;flex-direction:column}.right{width:1162px;display:flex;flex-direction:column;position:relative}
 .th{height:40px;margin-left:3px;background:#5e5e5e;border:solid #0d0d0d;border-width:2px 0}
 .rows{height:412px;overflow:hidden}.left .rows{margin-left:3px}
 .tr{height:40px;border-bottom:2px solid #3a3a3a;--a:#464646;--b:#505050;background:var(--a)}
 .L{--a:#525252;--b:#585858}.j{border-bottom-color:#505050}
 .g{background:linear-gradient(90deg,var(--a) 16px,var(--b) 16px 656px,var(--a) 656px)}
 .bar{height:32px;box-sizing:border-box;border:solid;border-width:2px 0 2px 2px}
 .tan{background:#77674b;border-color:#938362 #000 #5f5139 #938362}.blue{background:#3341b5;border-color:#5563c8 #000 #28339a #5563c8}.red{background:#7b282c;border-color:#9a4a4e #000 #671b20 #9a4a4e}
 .foot{height:36px}
 .cti{position:absolute;left:20px;top:13px;width:2px;height:511px;background:#3c96f0}
 .head{position:absolute;left:10px;top:42px}`,
`<div class="r" style="height:54px">${line(3,956,[I('close',26,980),B(56,972,20,20,TAN),I('ham',122,978),T('渲染队列',214,983)])}</div>
<div class="r" style="height:4px;margin-top:-6px;margin-bottom:2px">${line(3,1004,[B(26,1004,114,4,'#f4f4f4')])}</div>
<div class="cols"><div class="left">
<div class="r" style="height:72px">${line(3,1010,[{x:26,y:1020,w:150,h:60,s:'display:flex;flex-direction:column;',html:`<div class="r" style="height:30px;overflow:visible">${line(26,1020,[T('0:00:00:01',26,1036,{z:29,b:600,c:blue,w:147})])}</div><div class="r" style="height:26px;overflow:visible">${line(26,1050,[T('00001 (25.00 fps)',26,1063,{z:20,f:SERIF,c:'#2168a8',w:148})])}</div>`},
 B(197,1027,802,38,'#323232',BOX+'display:flex;',line(199,1029,[I('find',211,1034)])),I('flow',1030,1035),I('suncube',1096,1028),I('shy2',1166,1034),I('frames',1220,1032),I('blur',1272,1032),I('graph',1338,1030)])}</div>
<div class="r th">${line(6,1084,[I('eye',17,1096,'#b4b4b4'),I('spk',46,1092),B(81,1097,12,12,'#b4b4b4','border-radius:50%;'),I('lock',108,1092),h2(140),I('tag',171,1092,'',20,22),h2(204),h2(270),T('图层名称',282,1103,th),h2(530),
 I('shy',541,1092),I('sun',573,1093),I('steps',602,1092),T('fx',632,1101,{z:26,f:'"Liberation Serif"',s:'font-style:italic;',w:21}),I('frames',660,1092,'',24,22),I('mb',690,1090,'',25,25),I('half',723,1093),I('cube',752,1092),h2(803),T('模式',815,1103,th),T('T',968,1103,{...th,w:13}),T('TrkMat',1002,1103,{...th,w:68}),h2(1136),T('父级和链接',1148,1103,th),h2(1369)])}</div>
<div class="rows">${rows.map(left).join('')}</div>
<div class="r foot" style="border-top:2px solid #2a2a2a;margin-left:3px">${line(6,1536,[I('tg1',18,1542,'#3c96f0'),I('tg2',54,1541,'#3c96f0'),I('tg3',90,1541)])}</div>
</div><div class="right">
<div style="display:flex;height:524px"><div style="width:1126px;border-left:2px solid #2d2d2d;box-sizing:border-box;padding-top:10px">
<div class="r" style="height:22px;background:#3a3a3a;border-top:2px solid #2e2e2e;border-radius:8px 8px 0 0">${line(1404,1022,[CAP(1405,1024,12,16,1),B(1417,1022,965,20,'#7b7b7b','border:2px solid #111;'),CAP(2382,1024,12,16,0),B(2514,1022,14,20,'#2c2c2c')])}</div>
<div class="r" style="height:38px;background:#3e3e3e">${line(1404,1042,['0:00s','01s','02s','03s','04s','05s','06s','07s','08s'].map((s,i)=>{const x=Math.round(1418.500+125.200*i),w=i?28:48;return{x:x-40,y:1042,w:80,h:38,s:'display:flex;flex-direction:column;align-items:center;',html:`<div class="r" style="height:28px;width:${w}px;overflow:visible;margin-${i?'right:4':'left:6'}px">${line(0,1042,[T(s,0,1056,{z:22,f:SERIF,c:'#d2d2d2',w})])}</div><div style="width:2px;height:10px;background:#c4c4c4"></div>`}}))}</div>
<div class="r" style="height:34px;background:#3a3a3a;border-bottom:2px solid #111">${line(1404,1080,[CAP(1406,1082,11,30,1),B(1417,1080,643,32,'#797979','border:solid #111;border-width:2px 2px 0 2px;box-shadow:inset 0 2px #999,inset 0 -2px #666;'),CAP(2060,1082,11,30,0),B(2168,1080,2,12,'#c4c4c4'),B(2294,1080,2,12,'#c4c4c4'),B(2419,1080,2,12,'#c4c4c4'),B(2514,1080,14,32,'#2c2c2c')])}</div>
<div class="r" style="height:8px;border-bottom:2px solid #111">${line(1404,1114,[B(1418,1114,1110,6,'#1eb41a')])}</div>
<div class="rows" style="margin-left:-2px;border-left:2px solid #2d2d2d;box-sizing:border-box"><div style="margin-left:-2px">${rows.map(right).join('')}</div></div>
</div>
<div style="width:36px;border-left:2px solid #2e2e2e;box-sizing:border-box;display:flex;flex-direction:column">
<div class="r" style="height:112px">${line(2530,1010,[I('marker',2537,1086)])}</div>
<div class="r" style="height:34px;border-top:2px solid #111;margin-top:-2px">${line(2530,1122,[I('cmk',2530,1126)])}</div>
<div class="r" style="height:380px;background:#363636">${line(2530,1154,[B(2531,1340,29,192,'#454545','border-radius:14px;')])}</div></div></div>
<div class="r foot">${line(1402,1534,[I('mt1',1414,1546),I('knob',1467,1543,'#b4b4b4'),B(1487,1549,65,4,'#5a5a5a'),I('mt2',1575,1544),B(1618,1534,910,34,'#373737','display:flex;',line(1618,1534,[B(1620,1536,794,30,'#454545','border-radius:15px;')]))])}</div>
<div class="cti"></div><ae-icon class="head" name="head" style="width:22px;height:28px;color:#3c96f0"></ae-icon>
</div></div>`);

/* ---------- red markup laid over the window ---------- */
def('ae-markup',`:host{position:absolute;inset:0;width:2564px;height:1570px;font-family:"Noto Sans CJK SC",sans-serif;font-weight:700;font-size:39.8px}
 svg{position:absolute;inset:0;filter:drop-shadow(1px 2px 2px #0006)}
 p{position:absolute;margin:0;line-height:56px;white-space:pre;color:#f60505;-webkit-text-stroke:7px #fff;paint-order:stroke fill;filter:drop-shadow(1px 2px 2px #0008)}`,
`<svg width="2564" height="1570"><g fill="none" stroke="#fc0606" stroke-width="4"><ellipse cx="440" cy="70.500" rx="48" ry="49.500"/><rect x="10" y="1108" width="43" height="300" rx="7" stroke-width="5"/></g>
<g fill="#ff0000"><path d="M458 140L488 157L481 162L644 441L640 446L466 171L458 175Z"/><path d="M608 641L612 642L402 1399L410 1402L386 1426L377 1391L387 1395Z"/></g></svg>
<p style="left:510px;top:520px">画一个带颜色的
图层</p><p style="left:68px;top:1057px">关闭前面图层</p>`);

def('ae-window',`:host{position:relative;width:2564px;height:1570px;overflow:hidden;background:#333;border-left:3px solid #0e0e0e;font-family:${UI};}
 .main{display:flex;gap:8px;height:862px;margin:4px 0 8px}.m{margin-left:-3px}`,
`<ae-titlebar></ae-titlebar><ae-toolbar></ae-toolbar><div class="main"><ae-project-panel></ae-project-panel><ae-comp-panel></ae-comp-panel><ae-side-panel></ae-side-panel></div><ae-timeline-panel></ae-timeline-panel><ae-markup class="m"></ae-markup>`);
</script>
</body>
</html>
